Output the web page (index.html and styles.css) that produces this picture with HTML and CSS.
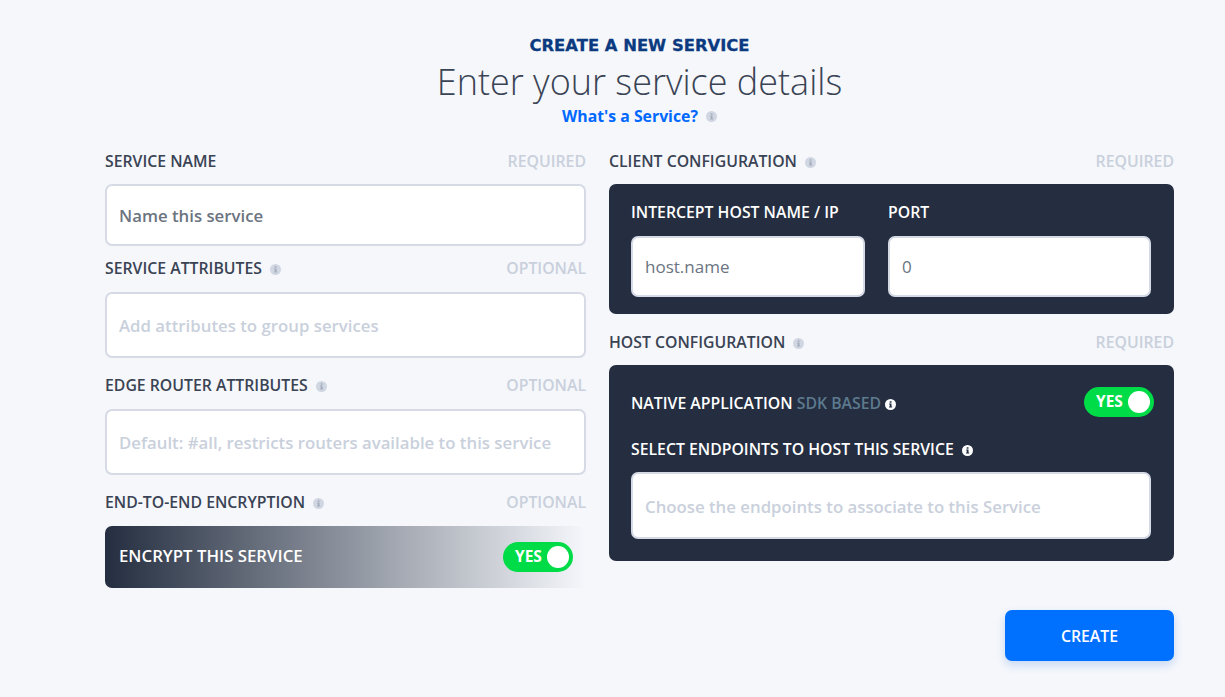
FILE: index.html
```html
<!DOCTYPE html>
<html lang="en">
<head>
<meta charset="utf-8">
<title>Create a new service</title>
<link rel="stylesheet" href="styles.css">
</head>
<body>
<svg class="defs" width="0" height="0" aria-hidden="true"><defs>
<symbol id="info" viewBox="0 0 12 12"><circle cx="6" cy="6" r="6" fill="currentColor"/><path d="M4.5 5h2.6v3.2h.7v1.1H4.4V8.2h.8V6.1h-.7zM5.1 2.5h2v1.7h-2z" fill="var(--ib)"/></symbol>
</defs></svg>
<main class="page">
<header class="head">
<div class="eyebrow">CREATE A NEW SERVICE</div>
<h1 class="title">Enter your service details</h1>
<div class="sub"><span class="link">What's a Service?</span><svg class="i i-light"><use href="#info"/></svg></div>
</header>
<div class="cols">
<section class="col left">
<div class="lab h-a"><span>SERVICE NAME</span><em>REQUIRED</em></div>
<div class="inp f1 dark-ph">Name this service</div>
<div class="lab h-b"><span>SERVICE ATTRIBUTES<svg class="i i-light"><use href="#info"/></svg></span><em>OPTIONAL</em></div>
<div class="inp f2">Add attributes to group services</div>
<div class="lab h-c"><span>EDGE ROUTER ATTRIBUTES<svg class="i i-light"><use href="#info"/></svg></span><em>OPTIONAL</em></div>
<div class="inp f3">Default: #all, restricts routers available to this service</div>
<div class="lab h-c"><span>END-TO-END ENCRYPTION<svg class="i i-light"><use href="#info"/></svg></span><em>OPTIONAL</em></div>
<div class="enc"><span class="enc-text">ENCRYPT THIS SERVICE</span><div class="tog"><b>YES</b><i></i></div></div>
</section>
<section class="col right">
<div class="lab h-a"><span>CLIENT CONFIGURATION<svg class="i i-light"><use href="#info"/></svg></span><em>REQUIRED</em></div>
<div class="panel p1">
<div class="pf host"><label>INTERCEPT HOST NAME / IP</label><div class="inp f4 dark-ph">host.name</div></div>
<div class="pf port"><label>PORT</label><div class="inp f4 dark-ph">0</div></div>
</div>
<div class="lab h-d"><span>HOST CONFIGURATION<svg class="i i-light"><use href="#info"/></svg></span><em>REQUIRED</em></div>
<div class="panel p2">
<div class="row"><label>NATIVE APPLICATION <small>SDK BASED</small><svg class="i i-white tight"><use href="#info"/></svg></label><div class="tog"><b>YES</b><i></i></div></div>
<label class="sel">SELECT ENDPOINTS TO HOST THIS SERVICE<svg class="i i-white"><use href="#info"/></svg></label>
<div class="inp f5">Choose the endpoints to associate to this Service</div>
</div>
</section>
</div>
<div class="actions"><button class="create">CREATE</button></div>
</main>
</body>
</html>
```
FILE: styles.css
```css
* { box-sizing: border-box; }
html, body { margin: 0; height: 100%; }
body { background: #f5f7fb; font-family: "Open Sans", sans-serif; color: #2a3446; overflow: hidden; }
.defs { position: absolute; }
.page { width: 1225px; height: 697px; padding: 35px 51px 0 105px; }
.head { text-align: center; height: 114px; }
.eyebrow { font-family: "DejaVu Sans", sans-serif; font-weight: 700; font-size: 16.4px; line-height: 22px; height: 20px; color: #0b3a80; -webkit-text-stroke: 0.3px #0b3a80; }
.title { margin: 1px 0 0; font-weight: 300; font-size: 36px; line-height: 52px; color: #3a4354; }
.sub { display: flex; justify-content: center; align-items: center; line-height: 20px; margin-top: -2px; }
.link { color: #0068ff; font-weight: 700; font-size: 15.8px; }
.i { width: 11px; height: 11px; display: inline-block; margin-left: 8px; vertical-align: -1px; }
.i-light { color: #d0d6e2; --ib: #a4acbb; }
.i-white { color: #fff; --ib: #242e40; }
.tight { margin-left: 4px; }
.cols { display: flex; gap: 23px; }
.col { display: flex; flex-direction: column; }
.left { width: 481px; }
.right { width: 565px; }
.lab { display: flex; justify-content: space-between; align-items: center; font-size: 15.8px; font-weight: 600; color: #3a4354; line-height: 20px; }
.lab em { font-style: normal; color: #c9d0dc; font-size: 15.8px; }
.h-a { height: 24px; margin-bottom: 11px; }
.h-b { height: 24px; margin-top: 10px; margin-bottom: 12px; }
.h-c { height: 24px; margin-top: 15px; margin-bottom: 12px; }
.h-d { height: 24px; margin-top: 16px; margin-bottom: 11px; }
.inp { background: #fff; border: 2px solid #d5dae5; border-radius: 7px; display: flex; align-items: center; padding: 0 12px; font-size: 16.8px; font-weight: 600; color: #c9d0dc; white-space: nowrap; }
.dark-ph { color: #6b747f; }
.f1 { height: 62px; }
.f2, .f3 { height: 66px; }
.enc { height: 62px; border-radius: 7px; display: flex; align-items: center; justify-content: space-between; padding: 0 13px 0 14px; color: #fff; font-size: 16.8px; font-weight: 600; background: linear-gradient(90deg, #242e40 0%, #f5f7fb 100%); }
.enc-text { margin-top: -3px; }
.tog { width: 70px; height: 30px; border-radius: 15px; background: #00dc47; position: relative; color: #fff; font-size: 15.5px; }
.tog b { position: absolute; left: 12px; top: 4px; line-height: 20px; font-weight: 700; }
.tog i { position: absolute; right: 4px; top: 4px; width: 22px; height: 22px; border-radius: 50%; background: #fff; }
.panel { background: #242e40; border-radius: 7px; color: #fff; }
.p1 { height: 130px; display: flex; gap: 23px; padding: 16px 23px 0 22px; }
.pf label, .row label, .sel { font-size: 15.8px; font-weight: 600; line-height: 24px; display: block; }
.host { width: 234px; }
.port { flex: 1; }
.pf label { margin-bottom: 12px; }
.f4 { height: 61px; padding: 0 12px; color: #6b747f; font-size: 17px; font-weight: 500; }
.p2 { height: 196px; padding: 22px 20px 0 22px; }
.row { display: flex; justify-content: space-between; align-items: center; height: 30px; }
.row label { padding-top: 2px; }
.row small { font-size: 15.8px; font-weight: 600; color: #5d7a8f; }
.sel { margin-top: 20px; margin-bottom: 11px; }
.f5 { height: 67px; width: 520px; padding-top: 3px; line-height: 1; }
.actions { display: flex; justify-content: flex-end; margin-top: 22px; }
.create { width: 169px; height: 51px; border: 0; border-radius: 7px; background: #0070ff; color: #fff; font: 600 15.8px "Open Sans", sans-serif; box-shadow: 0 4px 10px rgba(0,90,220,.2); }
```
